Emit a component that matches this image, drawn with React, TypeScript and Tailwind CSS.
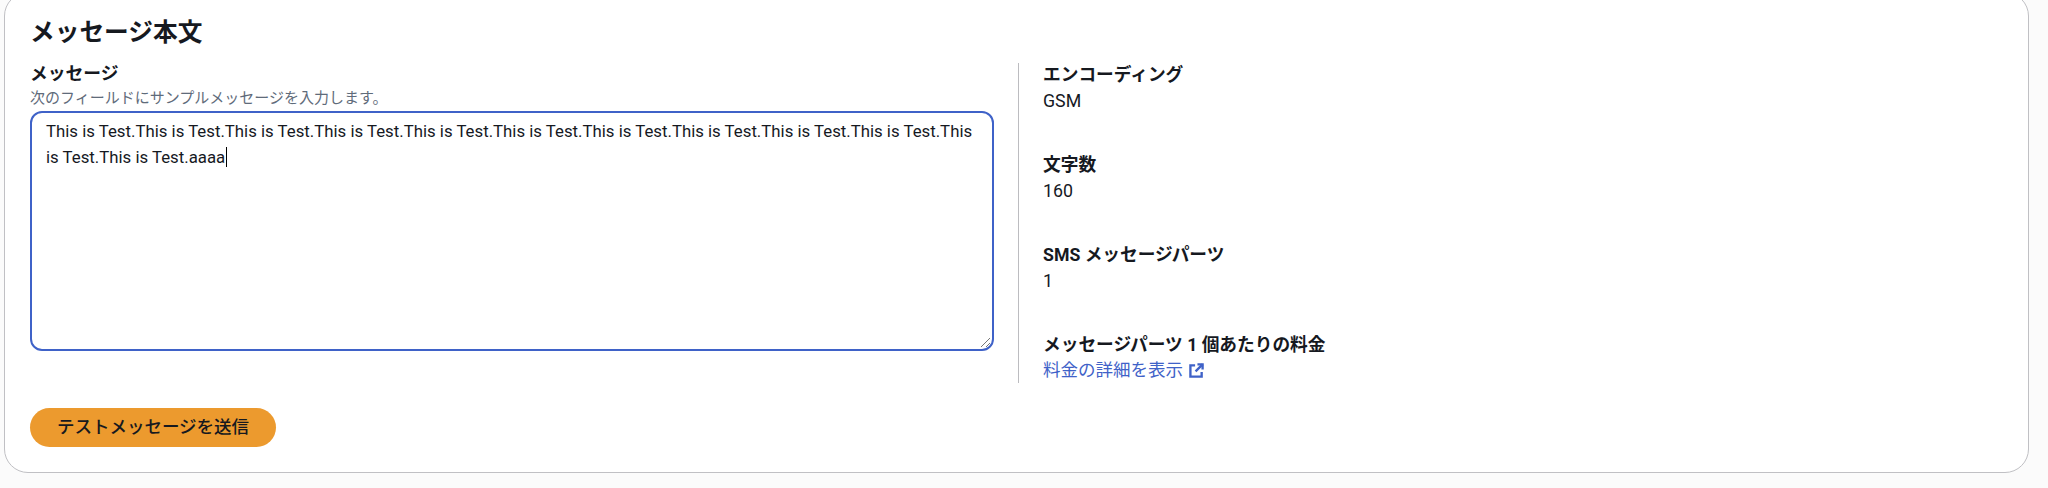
import React from "react";

const font = "font-['Roboto','Noto_Sans_CJK_JP',sans-serif]";

const message =
  "This is Test.This is Test.This is Test.This is Test.This is Test.This is Test.This is Test.This is Test.This is Test.This is Test.This is Test.This is Test.aaaa";

const Stat = ({ label, value }: { label: string; value: React.ReactNode }) => (
  <div className="h-[90px]">
    <div className="text-[17.7px] leading-[26px] font-bold text-[#16191f]">{label}</div>
    <div className="text-[17.8px] leading-[26px] text-[#16191f]">{value}</div>
  </div>
);

export default function App() {
  return (
    <div className={`h-[488px] overflow-hidden bg-[#fbfbfb] pt-px ${font}`}>
      <div className="mt-[-9px] ml-1 h-[481px] w-[2025px] rounded-[24px] border border-[#c0c0c4] bg-white pt-[23px] pr-[26px] pl-[25px]">
        <h2 className="text-[24.7px] leading-[34px] font-bold text-[#16191f]">メッセージ本文</h2>
        <div className="mt-[13px] flex">
          <div className="w-[964px]">
            <div className="text-[17.8px] leading-[22px] font-bold text-[#16191f]">メッセージ</div>
            <div className="mt-[4px] text-[15px] leading-[18px] text-[#5f6b7a]">
              次のフィールドにサンプルメッセージを入力します。
            </div>
            <div className="relative mt-[4px] h-[240px] rounded-[12px] border-[2.5px] border-[#3f62c8] px-[14px] py-[5px] text-[16.8px] leading-[26px] text-[#16191f]">
              {message}
              <span className="ml-px inline-block h-[20px] w-px bg-black align-[-4px]" />
              <svg className="absolute right-px bottom-px h-3 w-3" viewBox="0 0 12 12" fill="none" stroke="#777" strokeWidth="1">
                <path d="M2 11 11 2M7 11l4-4" />
              </svg>
            </div>
          </div>
          <div className="mx-6 w-px bg-[#bcbcc0]" />
          <div className="-mt-px flex-1">
            <Stat label="エンコーディング" value="GSM" />
            <Stat label="文字数" value="160" />
            <Stat label="SMS メッセージパーツ" value="1" />
            <div className="text-[17.7px] leading-[26px] font-bold text-[#16191f]">メッセージパーツ 1 個あたりの料金</div>
            <a className="-mt-px flex items-center gap-1.5 text-[17.5px] leading-[26px] text-[#3f62c8]">
              料金の詳細を表示
              <svg className="h-[15px] w-[15px]" viewBox="0 0 16 16" fill="none" stroke="currentColor" strokeWidth="2.5">
                <path d="M6.5 2.5H1.5v12h12v-5" />
                <path d="M9 1.5h5.5V7" />
                <path d="M14.5 1.5 7 9" />
              </svg>
            </a>
          </div>
        </div>
        <button className="mt-[25px] h-[39px] w-[246px] rounded-full bg-[#ec9a2e] text-[17.5px] font-medium text-[#16191f]">
          テストメッセージを送信
        </button>
      </div>
    </div>
  );
}
